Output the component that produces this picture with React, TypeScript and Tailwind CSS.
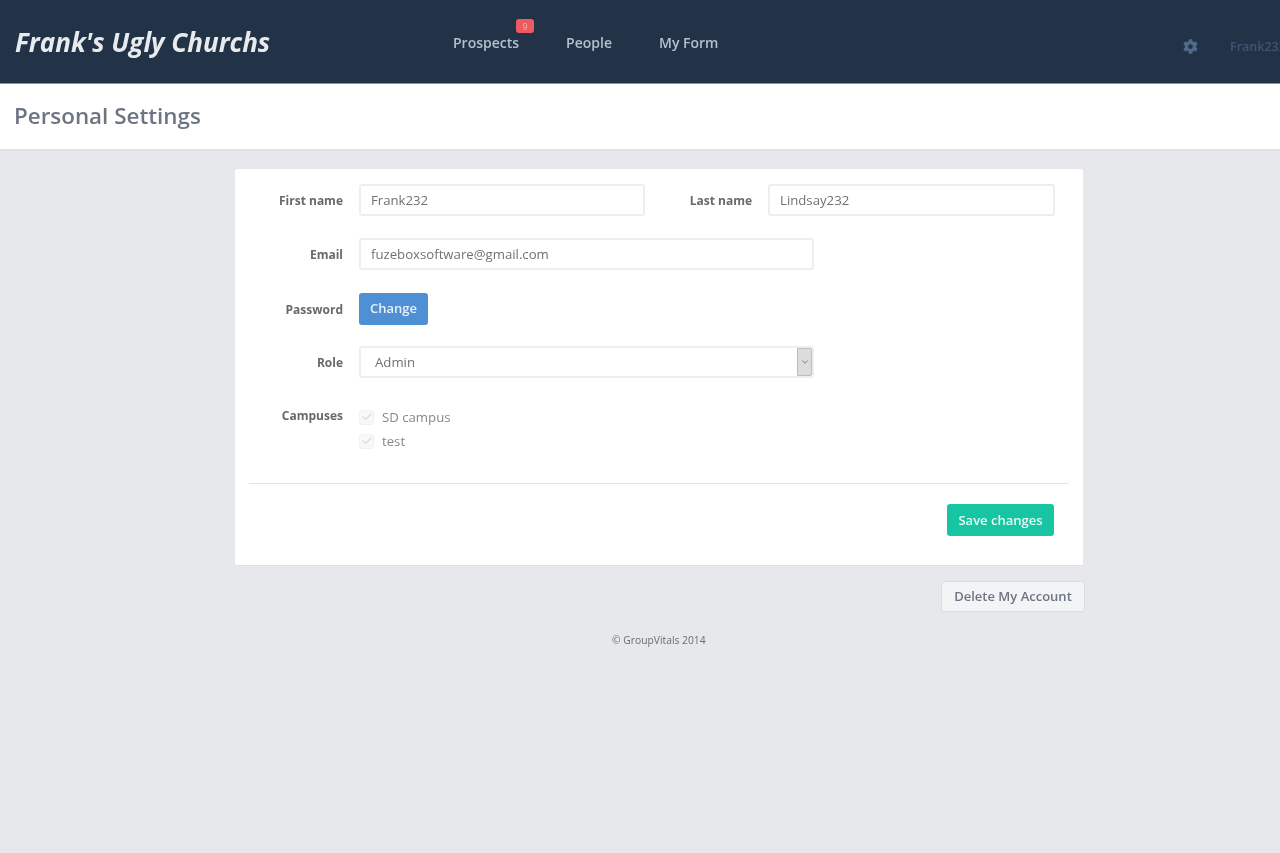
import { Check, ChevronDown } from "lucide-react";
import { FaCog } from "react-icons/fa";

const NAV = ["Prospects", "People", "My Form"];

function FieldLabel({ children }: { children: string }) {
  return <label className="w-[108px] shrink-0 pt-[2px] text-right text-[12px] font-bold text-[#676a6c]">{children}</label>;
}

function TextBox({ value, className }: { value: string; className: string }) {
  return (
    <div className={`flex items-center rounded-[3px] border-2 border-[#eeeeef] bg-white pt-[1px] pl-[10px] text-[13.2px] text-[#6f7275] ${className}`}>
      {value}
    </div>
  );
}

function CheckRow({ label }: { label: string }) {
  return (
    <div className="flex h-6 items-center">
      <span className="flex h-[15px] w-[15px] items-center justify-center rounded-[2px] border border-[#f2f2f2] bg-[#f8f8f8]">
        <Check className="h-3 w-3 text-[#dcdcdc]" strokeWidth={2.5} />
      </span>
      <span className="ml-2 pt-[1px] text-[13.2px] text-[#85888a]">{label}</span>
    </div>
  );
}

export default function App() {
  return (
    <div className="flex min-h-[853px] flex-col bg-[#e7e8eb] font-['Open_Sans',sans-serif] blur-[0.5px]">
      <header className="flex h-[84px] shrink-0 border-b border-[#8b95a1] bg-[#233347]">
        <a className="ml-[15px] mt-[24px] h-fit w-[438px] shrink-0 text-[26px] leading-9 font-bold text-[#e8ebee] italic">Frank's Ugly Churchs</a>
        <nav className="mt-[33px] flex h-fit gap-[47px]">
          {NAV.map((item) => (
            <a key={item} className="relative text-[14px] leading-[19px] font-semibold text-[#b4c0cd]">
              {item}
              {item === "Prospects" && (
                <span className="absolute top-[-14px] right-[-15px] flex h-[14px] w-[18px] items-center justify-center rounded-[3px] bg-[#ee5a62] text-[9px] font-normal text-[#f3b5b8]">
                  9
                </span>
              )}
            </a>
          ))}
        </nav>
        <div className="ml-auto mt-[37px] flex h-fit w-[97px] shrink-0 items-center overflow-hidden whitespace-nowrap">
          <FaCog className="h-[15px] w-[15px] shrink-0 text-[#526a8a]" />
          <span className="ml-[32px] pt-[1px] text-[12.5px] font-semibold text-[#3f5672]">Frank232</span>
        </div>
      </header>

      <div className="flex h-[67px] shrink-0 items-center border-b-2 border-[#dfe0e3] bg-white pb-[2px] pl-[14px]">
        <h1 className="text-[22.4px] font-semibold text-[#6c7683]">Personal Settings</h1>
      </div>

      <main className="ml-[235px] w-[850px] pt-[18px]">
        <section className="h-[397px] w-[848px] rounded-[2px] border-b border-[#dedfe2] bg-white pt-[15px]">
          <div className="flex h-8 items-center">
            <FieldLabel>First name</FieldLabel>
            <TextBox value="Frank232" className="ml-4 h-8 w-[286px]" />
            <span className="w-[107px] pt-[2px] text-right text-[12px] font-bold text-[#676a6c]">Last name</span>
            <TextBox value="Lindsay232" className="ml-4 h-8 w-[287px]" />
          </div>
          <div className="mt-[22px] flex h-8 items-center">
            <FieldLabel>Email</FieldLabel>
            <TextBox value="fuzeboxsoftware@gmail.com" className="ml-4 h-8 w-[455px]" />
          </div>
          <div className="mt-[23px] flex h-8 items-center">
            <FieldLabel>Password</FieldLabel>
            <button type="button" className="ml-4 h-8 w-[69px] rounded-[3px] bg-[#4f90d4] text-[13px] font-semibold text-[#e6f0fa]">Change</button>
          </div>
          <div className="mt-[21px] flex h-8 items-center">
            <FieldLabel>Role</FieldLabel>
            <div className="ml-4 flex h-8 w-[455px] items-center justify-between rounded-[3px] border-2 border-[#eeeeef] bg-white pl-[14px] text-[13.2px] text-[#6f7275]">
              <span className="pt-[1px]">Admin</span>
              <span className="flex h-full w-[15px] items-center justify-center rounded-r-[2px] border border-[#bdbdbd] bg-[#dcdcdc]">
                <ChevronDown className="h-2.5 w-2.5 text-[#666666]" />
              </span>
            </div>
          </div>
          <div className="mt-[27px] flex items-start">
            <div className="flex h-5 items-center"><FieldLabel>Campuses</FieldLabel></div>
            <div className="ml-4 w-fit">
              <CheckRow label="SD campus" />
              <CheckRow label="test" />
            </div>
          </div>
          <hr className="mx-[14px] mt-[30px] border-t border-[#e3e4e5]" />
          <div className="mt-5 flex justify-end pr-[29px]">
            <button type="button" className="h-8 w-[107px] rounded-[3px] bg-[#17c5a2] pt-[1px] text-[13px] font-semibold text-[#e8faf6]">Save changes</button>
          </div>
        </section>
        <div className="mt-[15px] flex justify-end">
          <button type="button" className="h-[31px] w-[144px] rounded-[3px] border border-[#dcdde0] bg-[#f3f4f6] text-[13px] font-semibold text-[#6c7683]">Delete My Account</button>
        </div>
        <p className="mt-[22px] pl-[377px] text-[10.3px] leading-3 text-[#6a6c6f]">© GroupVitals 2014</p>
      </main>
    </div>
  );
}
